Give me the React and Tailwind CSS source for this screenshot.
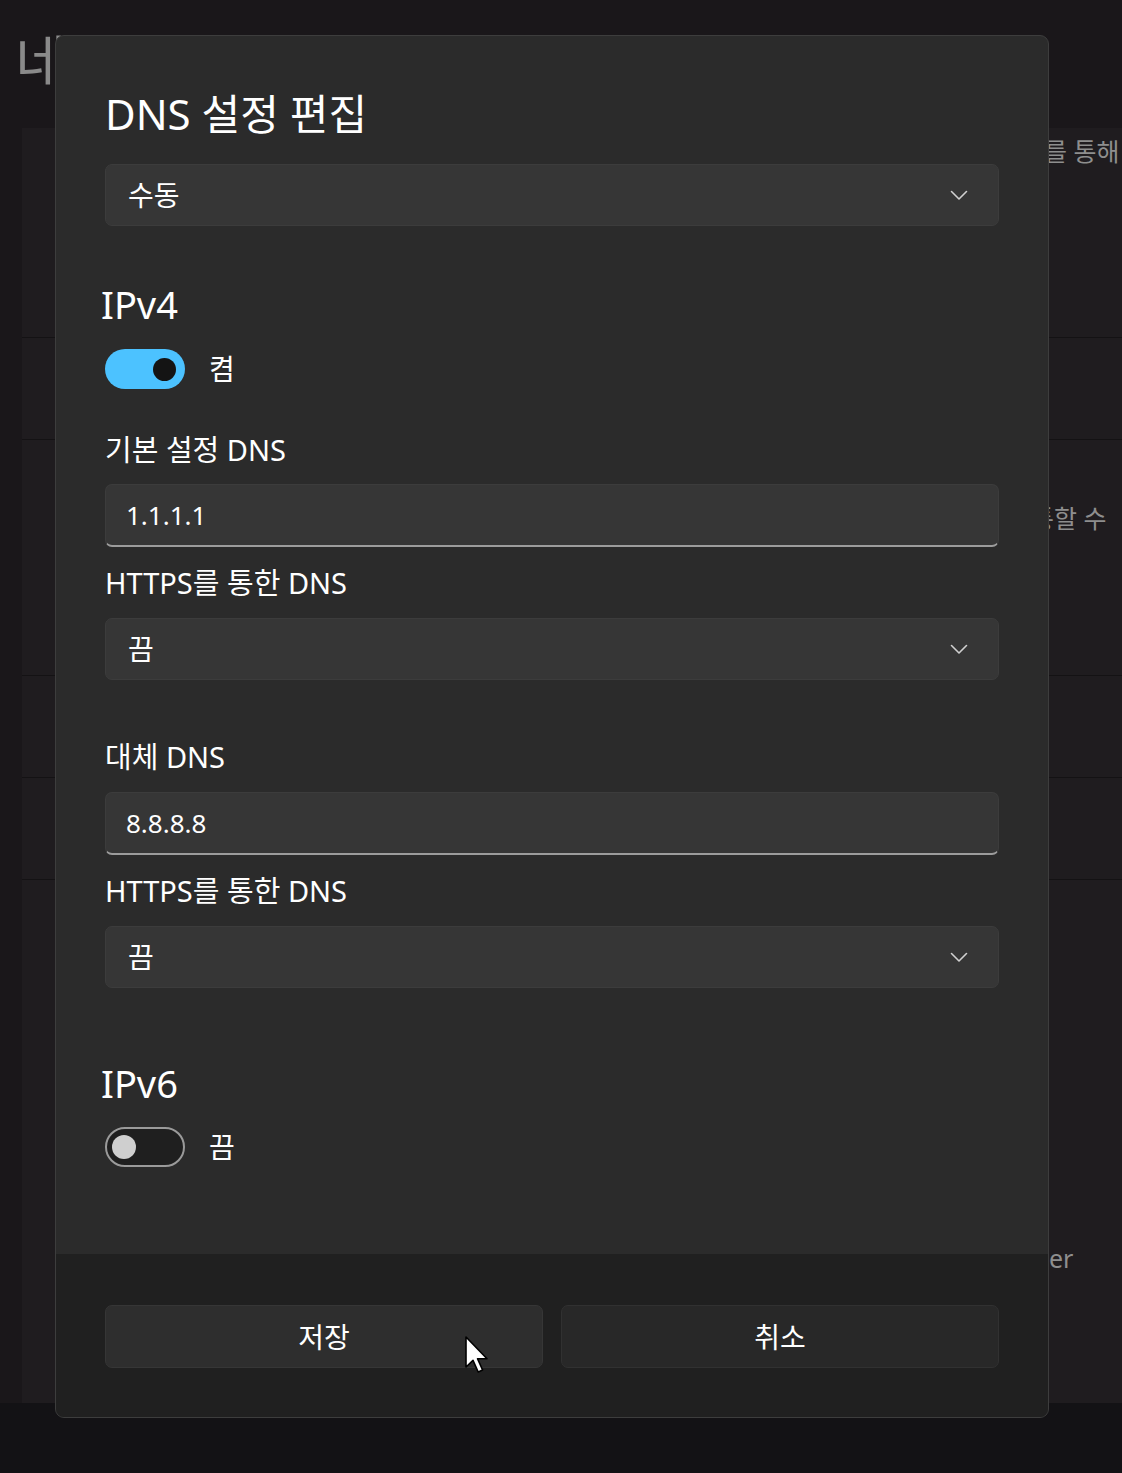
import React from 'react';

const Chevron = () => (
  <svg width="18" height="11" viewBox="0 0 18 11" fill="none">
    <path d="M1.5 1.5 L9 9 L16.5 1.5" stroke="#d0d0d0" strokeWidth="1.6" strokeLinecap="round" strokeLinejoin="round" />
  </svg>
);

const Select = ({ value }) => (
  <div className="h-[62px] rounded-[7px] bg-[#363636] border border-[#3c3c3c] flex items-center justify-between pl-[22px] pr-[30px]">
    <span className="text-[28px] text-white">{value}</span>
    <Chevron />
  </div>
);

const TextInput = ({ value }) => (
  <div className="h-[63px] rounded-[7px] bg-[#363636] border border-[#3c3c3c] border-b-2 border-b-[#9c9c9c] flex items-center pl-[20px]">
    <span className="text-[26px] text-white">{value}</span>
  </div>
);

const Label = ({ children, className = '' }) => (
  <div className={`h-[36px] flex items-center text-[29px] text-white ${className}`}>{children}</div>
);

const Toggle = ({ on, label }) => (
  <div className="h-[40px] flex items-center">
    {on ? (
      <div className="w-[80px] h-[40px] rounded-full bg-[#4cc2ff] flex items-center justify-end pr-[9px]">
        <div className="w-[23px] h-[23px] rounded-full bg-[#141414]" />
      </div>
    ) : (
      <div className="w-[80px] h-[40px] rounded-full bg-[#1f1f1f] border-2 border-[#9a9a9a] flex items-center pl-[5px]">
        <div className="w-[24px] h-[24px] rounded-full bg-[#cfcfcf]" />
      </div>
    )}
    <span className="ml-[24px] text-[28px] text-white">{label}</span>
  </div>
);

const Cursor = () => (
  <svg width="24" height="38" viewBox="0 0 12 19" className="absolute left-[465px] top-[1336px]">
    <path d="M0.5 0.5 L0.5 15.5 L4 12.2 L6.6 18 L8.8 17 L6.3 11.4 L11 11.4 Z" fill="#ffffff" stroke="#000000" strokeWidth="0.8" strokeLinejoin="round" />
  </svg>
);

export default function App() {
  return (
    <div className="relative w-[1122px] h-[1473px] overflow-hidden bg-[#1a171a] font-['Noto_Sans','Noto_Sans_CJK_KR',sans-serif] flex flex-col">
      {/* dimmed settings page behind the dialog */}
      <div className="h-[128px] pl-[15px] pt-[28px]">
        <span className="text-[56px] leading-[64px] text-[#8a8a8a] whitespace-nowrap">네트</span>
      </div>
      <div className="ml-[22px] h-[1275px] bg-[#1f1c1f] flex flex-col overflow-hidden">
        <div className="h-[210px] border-b border-[#141214] pl-[1022px] pt-[7px]">
          <span className="text-[25px] leading-[32px] text-[#8e8e8e] whitespace-nowrap">를 통해</span>
        </div>
        <div className="h-[102px] border-b border-[#141214]" />
        <div className="h-[236px] border-b border-[#141214] pl-[1009px] pt-[62px]">
          <span className="text-[25px] leading-[32px] text-[#8e8e8e] whitespace-nowrap">통할 수</span>
        </div>
        <div className="h-[102px] border-b border-[#141214]" />
        <div className="h-[102px] border-b border-[#141214]" />
        <div className="flex-1 pl-[1027px] pt-[362px]">
          <span className="text-[25px] leading-[32px] text-[#8e8e8e] whitespace-nowrap">er</span>
        </div>
      </div>
      <div className="flex-1 bg-[#131215]" />

      {/* dialog */}
      <div className="absolute left-[55px] top-[35px] w-[994px] h-[1383px] rounded-[9px] border border-[#3d3d3d] bg-[#2b2b2b] flex flex-col overflow-hidden">
        <div className="flex-1 px-[49px] pt-[49px] flex flex-col">
          <div className="h-[56px] flex items-center text-[42px] text-white">DNS 설정 편집</div>
          <div className="mt-[23px]"><Select value="수동" /></div>

          <div className="mt-[53px] h-[50px] flex items-center text-[38px] text-white -ml-[4px]">IPv4</div>
          <div className="mt-[20px]"><Toggle on label="켬" /></div>

          <Label className="mt-[43px]">기본 설정 DNS</Label>
          <div className="mt-[16px]"><TextInput value="1.1.1.1" /></div>
          <Label className="mt-[18px]">HTTPS를 통한 DNS</Label>
          <div className="mt-[17px]"><Select value="끔" /></div>

          <Label className="mt-[59px]">대체 DNS</Label>
          <div className="mt-[17px]"><TextInput value="8.8.8.8" /></div>
          <Label className="mt-[18px]">HTTPS를 통한 DNS</Label>
          <div className="mt-[17px]"><Select value="끔" /></div>

          <div className="mt-[70px] h-[50px] flex items-center text-[38px] text-white -ml-[4px]">IPv6</div>
          <div className="mt-[19px]"><Toggle on={false} label="끔" /></div>
        </div>

        <div className="h-[163px] bg-[#202020] px-[49px] pt-[51px] flex gap-[18px]">
          <button className="flex-1 h-[63px] rounded-[7px] bg-[#2e2e2e] border border-[#363636] text-[28px] text-white">저장</button>
          <button className="flex-1 h-[63px] rounded-[7px] bg-[#282828] border border-[#313131] text-[28px] text-white">취소</button>
        </div>
      </div>

      <Cursor />
    </div>
  );
}
